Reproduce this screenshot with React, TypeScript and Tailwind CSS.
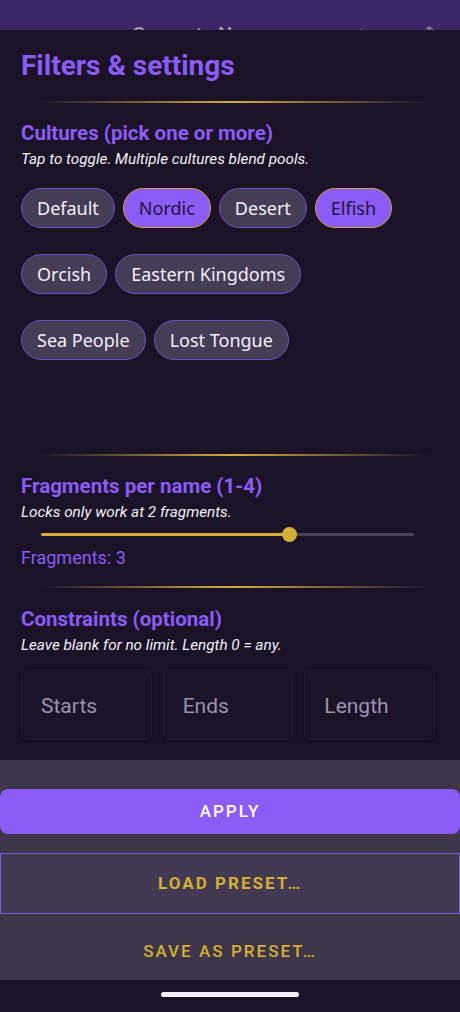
import { useState } from 'react'

const CULTURES = ['Default', 'Nordic', 'Desert', 'Elfish', 'Orcish', 'Eastern Kingdoms', 'Sea People', 'Lost Tongue']

function Divider({ className = '' }: { className?: string }) {
  return (
    <div
      className={`h-[2px] ml-[16px] mr-[5px] bg-gradient-to-r from-transparent via-[#d9ab3c] to-transparent ${className}`}
    />
  )
}

export default function App() {
  const [selected, setSelected] = useState<string[]>(['Nordic', 'Elfish'])
  const [fragments, setFragments] = useState(3)

  const toggle = (name: string) => {
    setSelected((s) => (s.includes(name) ? s.filter((x) => x !== name) : [...s, name]))
  }

  const pct = ((fragments - 1) / 3) * 100

  return (
    <div className="w-[460px] h-[1012px] flex flex-col bg-[#1a1226] overflow-hidden font-['Roboto',sans-serif]">
      {/* header peeking behind the sheet */}
      <div className="h-[30px] shrink-0 bg-[#3b2766] overflow-hidden">
        <div className="flex items-start justify-between pl-[30px] pr-[22px] pt-[25px] text-[#a79cb8]">
          <span className="text-[22px] leading-none">←</span>
          <span className="ml-[80px] text-[20px] font-medium leading-none">Generate Names</span>
          <span className="ml-auto mr-[56px] text-[16px] leading-none">▲</span>
          <span className="text-[16px] leading-none">✎</span>
        </div>
      </div>

      {/* sheet */}
      <div className="shrink-0 pl-[21px] pr-[25px] pb-[20px] bg-[#1a1226]">
        <h1 className="mt-[19px] text-[28px] leading-[34px] font-bold text-[#8a5cf5]">Filters &amp; settings</h1>
        <Divider className="mt-[18px]" />

        <h2 className="mt-[18px] text-[20.5px] leading-[24px] font-bold text-[#8a5cf5]">Cultures (pick one or more)</h2>
        <p className="mt-[4px] text-[15.3px] leading-[20px] italic text-[#f2eef7]">Tap to toggle. Multiple cultures blend pools.</p>

        <div className="mt-[19px] w-[400px] flex flex-wrap gap-x-[8px] gap-y-[26px] font-['Noto_Sans',sans-serif]">
          {CULTURES.map((c) => {
            const on = selected.includes(c)
            return (
              <button
                key={c}
                onClick={() => toggle(c)}
                className={
                  on
                    ? 'h-[40px] px-[15px] rounded-full border border-[#c9a040] bg-[#8b5cf6] text-[#24153f] text-[18px]'
                    : 'h-[40px] px-[15px] rounded-full border border-[#6b50cc] bg-[#453c55] text-[#f3eef8] text-[18px]'
                }
              >
                {c}
              </button>
            )
          })}
        </div>

        <Divider className="mt-[94px]" />

        <h2 className="mt-[18px] text-[20.5px] leading-[24px] font-bold text-[#8a5cf5]">Fragments per name (1-4)</h2>
        <p className="mt-[4px] text-[15.3px] leading-[20px] italic text-[#f2eef7]">Locks only work at 2 fragments.</p>

        <div className="mt-[4px] ml-[20px] mr-[21px] h-[16px] relative flex items-center">
          <div className="h-[3px] w-full rounded-full bg-[#4a4358]" />
          <div className="absolute left-0 h-[3px] rounded-full bg-[#d4ae35]" style={{ width: `${pct}%` }} />
          <button
            onClick={() => setFragments(fragments === 4 ? 1 : fragments + 1)}
            className="absolute w-[15px] h-[15px] -ml-[7.5px] rounded-full bg-[#d4ae35]"
            style={{ left: `${pct}%` }}
          />
        </div>

        <p className="mt-[5px] text-[18px] leading-[22px] text-[#8a5cf5]">Fragments: {fragments}</p>

        <Divider className="mt-[17px]" />

        <h2 className="mt-[19px] text-[20.5px] leading-[24px] font-bold text-[#8a5cf5]">Constraints (optional)</h2>
        <p className="mt-[4px] text-[15.3px] leading-[20px] italic text-[#f2eef7]">Leave blank for no limit. Length 0 = any.</p>

        <div className="mt-[15px] grid grid-cols-3 gap-[11px]">
          {['Starts', 'Ends', 'Length'].map((p) => (
            <input
              key={p}
              placeholder={p}
              className="h-[70px] w-full min-w-0 rounded-[6px] border border-[#251c33] bg-[#1b1328] pl-[19px] pt-[2px] text-[21px] text-white placeholder:text-[#9b91ad] outline-none shadow-[0_1px_3px_rgba(0,0,0,0.4)]"
            />
          ))}
        </div>
      </div>

      {/* actions */}
      <div className="shrink-0 h-[220px] bg-[#3d3548] pt-[29px] flex flex-col">
        <button className="h-[45px] w-full rounded-[8px] bg-[#8b5cf6] text-white text-[17px] font-medium tracking-[0.12em]">
          APPLY
        </button>
        <button className="mt-[19px] h-[61px] w-full border border-[#7a5ce0] bg-[#423a50] text-[#d4ae35] text-[17px] font-bold tracking-[0.12em]">
          LOAD PRESET…
        </button>
        <button className="h-[66px] w-full pt-[10px] text-[#d4ae35] text-[17px] font-medium tracking-[0.12em]">
          SAVE AS PRESET…
        </button>
      </div>

      <div className="flex-1 bg-[#1a1226] flex justify-center pt-[12px]">
        <div className="w-[138px] h-[5px] rounded-full bg-[#f4f0fa]" />
      </div>
    </div>
  )
}
